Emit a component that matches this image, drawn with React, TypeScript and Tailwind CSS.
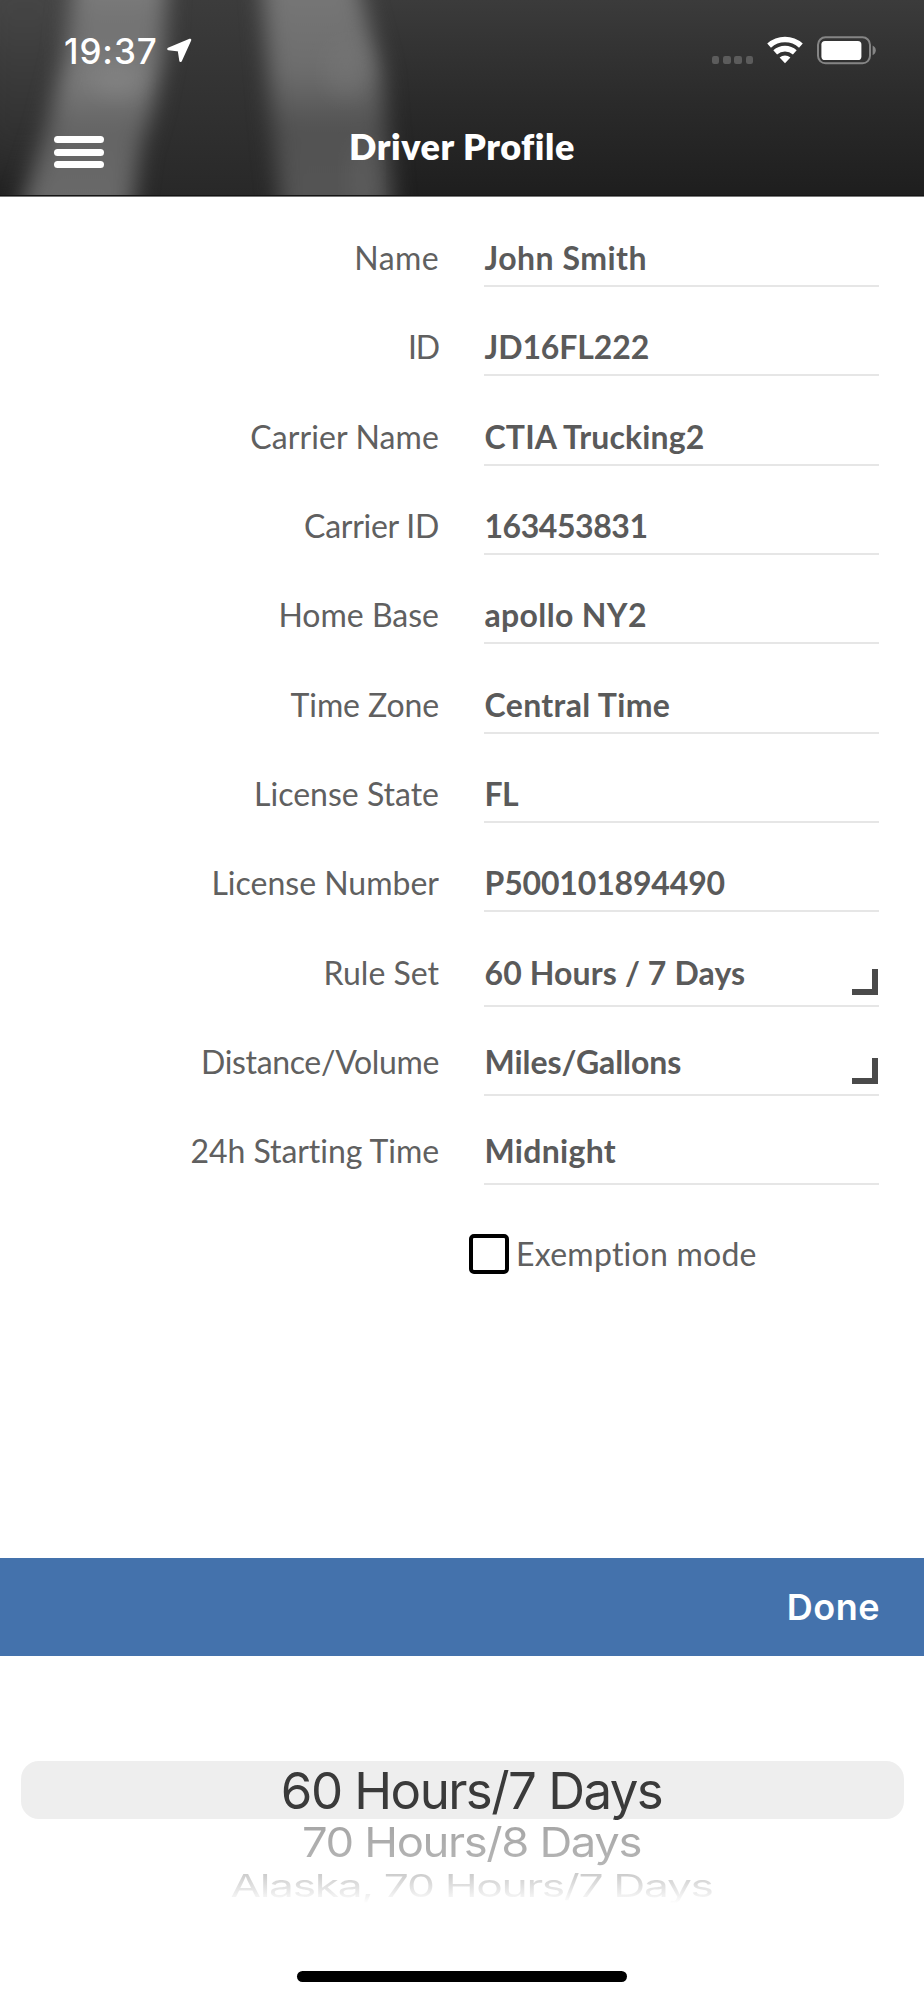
interface Field {
  label: string;
  value: string;
  labelTracking?: string;
  valueTracking?: string;
  select?: boolean;
  tall?: boolean;
}

const fields: Field[] = [
  { label: 'Name', value: 'John Smith', labelTracking: 'tracking-[0.4px]', valueTracking: 'tracking-[0.49px]' },
  { label: 'ID', value: 'JD16FL222', labelTracking: 'tracking-[-1.2px]', valueTracking: 'tracking-[-0.1px]' },
  { label: 'Carrier Name', value: 'CTIA Trucking2', labelTracking: 'tracking-[0.12px]', valueTracking: 'tracking-[0.15px]' },
  { label: 'Carrier ID', value: '163453831', labelTracking: 'tracking-[-0.27px]', valueTracking: 'tracking-[-0.44px]' },
  { label: 'Home Base', value: 'apollo NY2', valueTracking: 'tracking-[0.35px]' },
  { label: 'Time Zone', value: 'Central Time', labelTracking: 'tracking-[-0.1px]', valueTracking: 'tracking-[0.36px]' },
  { label: 'License State', value: 'FL', valueTracking: 'tracking-[-0.6px]' },
  { label: 'License Number', value: 'P500101894490', valueTracking: 'tracking-[-0.16px]' },
  { label: 'Rule Set', value: '60 Hours / 7 Days', valueTracking: 'tracking-[0.13px]', select: true, tall: true },
  { label: 'Distance/Volume', value: 'Miles/Gallons', labelTracking: 'tracking-[-0.36px]', valueTracking: 'tracking-[-0.06px]', select: true, tall: true },
  { label: '24h Starting Time', value: 'Midnight', labelTracking: 'tracking-[-0.05px]', valueTracking: 'tracking-[0.3px]', tall: true },
];

// Blurred road photo behind the title bar
function HeaderBackdrop() {
  return (
    <svg className="absolute inset-0 h-full w-full" viewBox="0 0 924 196" preserveAspectRatio="none">
      <defs>
        <linearGradient id="base" x1="0" y1="0" x2="0" y2="1">
          <stop offset="0" stopColor="#3b3b3b" />
          <stop offset="0.5" stopColor="#2b2b2b" />
          <stop offset="1" stopColor="#1e1e1e" />
        </linearGradient>
        <linearGradient id="left" x1="0" y1="0" x2="0" y2="1">
          <stop offset="0" stopColor="#4c4c4c" />
          <stop offset="1" stopColor="#2a2a2a" />
        </linearGradient>
        <linearGradient id="middle" x1="0" y1="0" x2="0" y2="1">
          <stop offset="0" stopColor="#3c3c3c" />
          <stop offset="0.6" stopColor="#303030" />
          <stop offset="1" stopColor="#282828" />
        </linearGradient>
        <linearGradient id="streakA" x1="0" y1="0" x2="0" y2="1">
          <stop offset="0" stopColor="#828282" />
          <stop offset="0.25" stopColor="#727272" />
          <stop offset="0.42" stopColor="#7c7c7c" />
          <stop offset="0.6" stopColor="#646464" />
          <stop offset="1" stopColor="#6c6c6c" />
        </linearGradient>
        <linearGradient id="streakB" x1="0" y1="0" x2="0" y2="1">
          <stop offset="0" stopColor="#7a7a7a" />
          <stop offset="0.4" stopColor="#6d6d6d" />
          <stop offset="0.6" stopColor="#525252" />
          <stop offset="1" stopColor="#565656" />
        </linearGradient>
        <filter id="soft" x="-50%" y="-50%" width="200%" height="200%" colorInterpolationFilters="sRGB">
          <feGaussianBlur stdDeviation="11" />
        </filter>
        <filter id="softer" x="-50%" y="-50%" width="200%" height="200%" colorInterpolationFilters="sRGB">
          <feGaussianBlur stdDeviation="24" />
        </filter>
      </defs>
      <rect width="924" height="196" fill="url(#base)" />
      <rect x="-40" y="-40" width="130" height="220" fill="url(#left)" filter="url(#softer)" />
      <rect x="120" width="180" height="196" fill="url(#middle)" />
      <polygon points="76,-40 168,-40 164,50 152,110 140,150 128,240 10,240 46,130 64,60" fill="url(#streakA)" filter="url(#soft)" />
      <polygon points="260,-40 352,-40 381,70 396,240 284,240 272,120" fill="url(#streakB)" filter="url(#soft)" />
      <ellipse cx="116" cy="80" rx="24" ry="14" fill="#8c8c8c" opacity="0.5" filter="url(#soft)" />
      <ellipse cx="346" cy="66" rx="20" ry="30" fill="#777777" opacity="0.5" filter="url(#soft)" />
      <ellipse cx="362" cy="180" rx="12" ry="40" fill="#666666" opacity="0.5" filter="url(#soft)" />
    </svg>
  );
}

function StatusBar() {
  return (
    <div className="flex h-[72px] items-start justify-between pl-16 pr-12 pt-[29px]">
      <div className="flex items-start font-['Inter',sans-serif] text-[35px] font-medium leading-[42px] tracking-[0.9px] text-white">
        <span className="pt-px">19:37</span>
        <svg className="ml-[8px] mt-2 h-[27px] w-[27px]" viewBox="0 0 27 27">
          <path d="M24 3 L2.5 12 L13 13.2 L14.6 23.8 Z" fill="#fff" stroke="#fff" strokeWidth="2.6" strokeLinejoin="round" />
        </svg>
      </div>
      <div className="flex items-start pt-[7px]">
        <div className="mr-[15px] mt-5 flex gap-[3.7px]">
          {[0, 1, 2, 3].map((dot) => (
            <span key={dot} className="h-[7.5px] w-[7.5px] rounded-[2.2px] bg-[#5c5c5c]" />
          ))}
        </div>
        <svg className="-ml-[1px] mr-[14px] h-7 w-9" viewBox="0 0 36 28">
          <path d="M2.1 9.6 A23.8 23.8 0 0 1 33.9 9.6" fill="none" stroke="#fff" strokeWidth="5.6" />
          <path d="M8.2 16.4 A14.6 14.6 0 0 1 27.8 16.4" fill="none" stroke="#fff" strokeWidth="5.6" />
          <path d="M18 27.2 L12.6 21.5 A8.2 8.2 0 0 1 23.4 21.5 Z" fill="#fff" />
        </svg>
        <svg className="h-[29px] w-[59px]" viewBox="0 0 59 29">
          <rect x="1" y="1.3" width="52" height="26" rx="7.5" fill="none" stroke="#858585" strokeWidth="2" />
          <rect x="4.4" y="5" width="40" height="19" rx="3.6" fill="#fff" />
          <path d="M55.6 9.4 Q58.8 11 58.8 14.3 Q58.8 17.6 55.6 19.2 Z" fill="#858585" />
        </svg>
      </div>
    </div>
  );
}

function Header() {
  return (
    <header className="relative h-[197px] overflow-hidden border-b border-[#777777] bg-[#1e1e1e]">
      <HeaderBackdrop />
      <div className="relative h-full border-b border-[#141414]">
        <StatusBar />
        <div className="grid grid-cols-[1fr_auto_1fr] items-start pt-[51px]">
          <button className="ml-[54px] mt-[13px] flex w-[50px] flex-col gap-[5.5px]">
            <span className="h-[7px] w-full rounded-full bg-white" />
            <span className="h-[7px] w-full rounded-full bg-white" />
            <span className="h-[7px] w-full rounded-full bg-white" />
          </button>
          <h1 className="pt-px text-[36px] font-extrabold leading-[44px] tracking-[0.56px] text-white">Driver Profile</h1>
        </div>
      </div>
    </header>
  );
}

function FieldRow({ field }: { field: Field }) {
  return (
    <div className="flex h-[89.33px] items-start gap-[45px] leading-[42px]">
      <div className={`w-[439px] text-right text-[#606060] ${field.labelTracking ?? ''}`}>{field.label}</div>
      <div
        className={`flex w-[395px] justify-between border-b-2 border-[#e6e6e6] font-bold ${
          field.tall ? 'h-[55px]' : 'h-[50px]'
        } ${field.valueTracking ?? ''}`}
      >
        <span className="pl-[0.5px]">{field.value}</span>
        {field.select && (
          <span className="mr-px mt-[17px] h-[26px] w-[26px] border-b-[6.5px] border-r-[6.5px] border-[#4a4a4a]" />
        )}
      </div>
    </div>
  );
}

export default function App() {
  return (
    <main className="flex h-[2000px] w-[924px] flex-col overflow-hidden bg-white font-['Lato',sans-serif] text-[32px] text-[#5a5a5a] [font-variant-ligatures:none]">
      <Header />

      <section className="h-[1361px] pt-10">
        {fields.map((field) => (
          <FieldRow key={field.label} field={field} />
        ))}
        <div className="ml-[469px] mt-[14px] flex h-10 items-center gap-[7px]">
          <span className="h-10 w-10 rounded-[5px] border-4 border-black" />
          <span className="leading-10 tracking-[0.25px] text-[#606060]">Exemption mode</span>
        </div>
      </section>

      {/* Picker toolbar */}
      <div className="flex h-[98px] items-center justify-end bg-[#4472ac] pr-11 font-['Inter',sans-serif]">
        <button className="text-[36px] font-semibold leading-[44px] tracking-[0.5px] text-white">Done</button>
      </div>

      {/* Picker wheel */}
      <section className="flex-1 pt-[105px] text-center font-['Inter',sans-serif] text-[51px] leading-[58px] tracking-[-1.56px]">
        <div className="mx-[20.5px] h-[58px] rounded-[18px] bg-[#eeeeee] pl-[19px] leading-[60px] text-[#3a3a3a]">
          60 Hours/7 Days
        </div>
        <div className="h-[49px] pl-[19px]">
          <div className="origin-top scale-x-[0.891] scale-y-[0.81] bg-linear-to-b from-[#a4a4a4] to-[#b6b6b6] bg-clip-text text-transparent">
            70 Hours/8 Days
          </div>
        </div>
        <div className="h-[49px] pl-[19px]">
          <div className="origin-top scale-x-[0.87] scale-y-[0.613] bg-linear-to-b from-[#c2c2c2] to-white bg-clip-text text-transparent">
            Alaska, 70 Hours/7 Days
          </div>
        </div>
        <div className="mx-auto mt-[54px] h-[11px] w-[330px] rounded-full bg-black" />
      </section>
    </main>
  );
}
